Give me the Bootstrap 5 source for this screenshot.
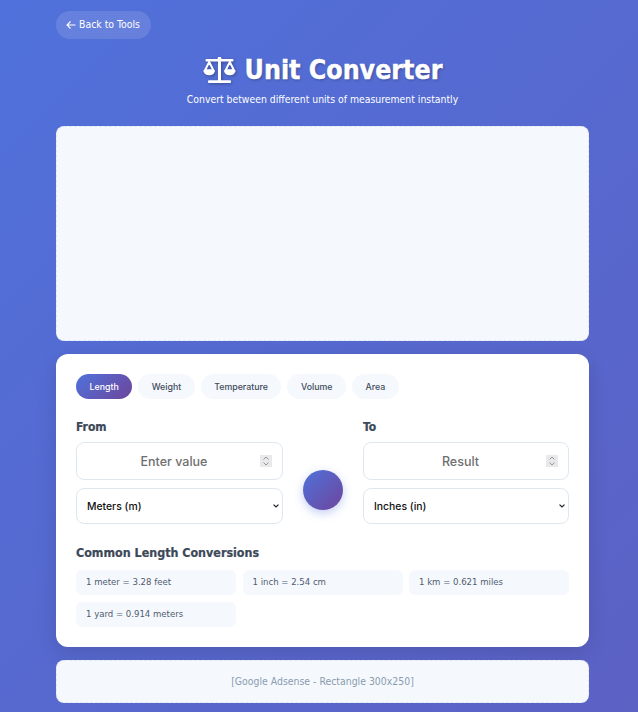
<!DOCTYPE html>
<html lang="en">
<head>
<meta charset="utf-8">
<title>Unit Converter</title>
<link href="https://cdn.jsdelivr.net/npm/bootstrap@5.3.0/dist/css/bootstrap.min.css" rel="stylesheet">
<style>
html,body{height:100%}
body{background:linear-gradient(135deg,#5071db 0%,#5c61c4 100%) fixed;font-family:"DejaVu Sans Condensed","DejaVu Sans",sans-serif;font-stretch:condensed;color:#3c4858;overflow:hidden}
.uc-wrap{width:533px;margin-left:56px;padding-top:11px}
.uc-back{display:inline-flex;align-items:center;gap:3px;height:28px;padding:0 10px;border-radius:14px;background:rgba(255,255,255,.12);color:#fff;font-size:10.400px;text-decoration:none;border:0;width:95px;white-space:nowrap}
.uc-arrow{width:10px;height:10px;flex:none}
.uc-title{font-size:26.500px;line-height:34px;font-weight:700;color:#fff;text-shadow:1px 1px 3px rgba(0,0,0,.3);-webkit-text-stroke:.4px #fff;margin:14px 0 0;gap:9px}
.uc-sub{font-size:10.350px;line-height:14px;color:#fff;margin:5px 0 0;text-align:center}
.uc-ad{background:#f5f9fd;border:1px dashed #dfe7f0;border-radius:8px;height:215px;margin-top:20px}
.uc-panel{background:#fff;border-radius:12px;padding:20px;margin-top:13px;height:293px;box-shadow:0 6px 20px rgba(0,0,0,.12)}
.uc-tab{height:25px;border:0;border-radius:13px;background:#f5f8fc;color:#3f4c5d;font:500 8.800px Inter,sans-serif;padding:0 13.500px;display:flex;align-items:center}
.uc-tab-on{background:linear-gradient(135deg,#4f72dc,#6e459b);color:#fff}
.uc-grid{display:grid;grid-template-columns:207px 40px 206px;column-gap:20px;margin-top:20px}
.uc-label{font-size:12px;line-height:14px;font-weight:700;color:#3c4858;margin:1px 0 8px;-webkit-text-stroke:.2px #3c4858}
.uc-field{position:relative;margin-bottom:8px}
.uc-input{display:block;width:100%;height:38px;border:1px solid #dfe8f1;border-radius:8px;background:#fff;text-align:center;font:500 12.500px Inter,sans-serif;color:#6f6f6f;padding:0 0 0 4px;appearance:textfield;-moz-appearance:textfield}
.uc-input::placeholder{color:#6f6f6f;opacity:1}
.uc-input:focus{outline:none}
.uc-spin{position:absolute;right:11px;top:13px;width:12px;height:12px;background:#e9e9ec}
.uc-spin svg{display:block}
.uc-select.form-select{height:36px;border:1px solid #dfe8f1;border-radius:8px;font:500 10.400px Inter,sans-serif;color:#111;padding:0 20px 0 10px;background-image:url("data:image/svg+xml,%3csvg xmlns='http://www.w3.org/2000/svg' viewBox='0 0 6 4'%3e%3cpath fill='none' stroke='%23222' stroke-width='1.200' d='M.5.6 3 3 5.500.6'/%3e%3c/svg%3e");background-position:right 3.500px center;background-size:6px 4px;box-shadow:none}
.uc-swap{width:40px;height:40px;border-radius:50%;border:0;background:linear-gradient(135deg,#4f72dc,#6e459b);box-shadow:0 3px 10px rgba(79,114,220,.35);align-self:end;margin-bottom:14px;padding:0}
.uc-heading{font-size:12.400px;line-height:16px;font-weight:700;color:#3c4858;margin:21px 0 9px;-webkit-text-stroke:.2px #3c4858}
.uc-chips{display:grid;grid-template-columns:repeat(3,160px);gap:7px 6.500px}
.uc-chip{height:25px;border-radius:6px;background:#f5f8fc;font-size:9.500px;color:#4f5d70;padding:0 10px;display:flex;align-items:center}
.uc-ad2{background:#f5f9fd;border:1px dashed #dfe7f0;border-radius:8px;height:43px;margin-top:13px;color:#8a9bb0;font-size:10.400px;display:flex;align-items:center;justify-content:center}
</style>
</head>
<body>
<div class="uc-wrap">
  <a class="uc-back" href="#"><svg class="uc-arrow" viewBox="0 0 10 10" fill="none" stroke="#fff" stroke-width="1.100"><path d="M9.500 5H1M4.500 1.500 1 5l3.500 3.500"/></svg>Back to Tools</a>
  <h1 class="uc-title d-flex justify-content-center align-items-center">
    <svg width="33" height="26" viewBox="0 0 33 26" fill="#fff" style="filter:drop-shadow(1px 1px 1.500px rgba(0,0,0,.3))">
      <rect x="15" y="0" width="3" height="24"/><circle cx="16.500" cy="2.500" r="2.200"/>
      <rect x="2.500" y="2" width="28" height="2.600" rx="1"/>
      <rect x="5" y="23.200" width="23" height="2.800" rx="1"/>
      <path fill="none" stroke="#fff" stroke-width="2" d="M6.200 5 2 13.200h8.400zM26.800 5 22.600 13.200H31z"/>
      <path d="M.4 13.500h11.600a5.800 4.800 0 0 1-11.600 0zM21 13.500h11.600a5.800 4.800 0 0 1-11.600 0z"/>
    </svg>
    <span>Unit Converter</span>
  </h1>
  <p class="uc-sub">Convert between different units of measurement instantly</p>
  <div class="uc-ad"></div>
  <div class="uc-panel">
    <div class="d-flex" style="gap:6px">
      <button class="uc-tab uc-tab-on">Length</button>
      <button class="uc-tab">Weight</button>
      <button class="uc-tab">Temperature</button>
      <button class="uc-tab">Volume</button>
      <button class="uc-tab">Area</button>
    </div>
    <div class="uc-grid">
      <div>
        <div class="uc-label">From</div>
        <div class="uc-field"><input class="uc-input" type="number" placeholder="Enter value"><span class="uc-spin"><svg width="12" height="12" viewBox="0 0 12 12" fill="none" stroke="#8a8a8a" stroke-width=".9"><path d="M3.500 4.500 6 2l2.500 2.500M3.500 7.500 6 10l2.500-2.500"/></svg></span></div>
        <select class="form-select uc-select"><option>Meters (m)</option></select>
      </div>
      <button class="uc-swap" aria-label="Swap units"></button>
      <div>
        <div class="uc-label">To</div>
        <div class="uc-field"><input class="uc-input" type="number" placeholder="Result"><span class="uc-spin"><svg width="12" height="12" viewBox="0 0 12 12" fill="none" stroke="#8a8a8a" stroke-width=".9"><path d="M3.500 4.500 6 2l2.500 2.500M3.500 7.500 6 10l2.500-2.500"/></svg></span></div>
        <select class="form-select uc-select"><option>Inches (in)</option></select>
      </div>
    </div>
    <div class="uc-heading">Common Length Conversions</div>
    <div class="uc-chips">
      <div class="uc-chip">1 meter = 3.28 feet</div>
      <div class="uc-chip">1 inch = 2.54 cm</div>
      <div class="uc-chip">1 km = 0.621 miles</div>
      <div class="uc-chip">1 yard = 0.914 meters</div>
    </div>
  </div>
  <div class="uc-ad2">[Google Adsense - Rectangle 300x250]</div>
</div>
<script src="https://cdn.jsdelivr.net/npm/bootstrap@5.3.0/dist/js/bootstrap.bundle.min.js"></script>
</body>
</html>
